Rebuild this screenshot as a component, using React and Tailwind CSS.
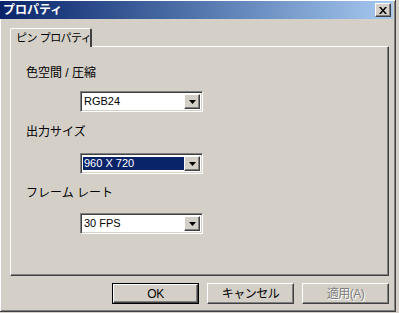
import React from 'react';

const FONT = { fontFamily: '"Liberation Sans", "Noto Sans CJK JP", sans-serif' };

const raised =
  'border border-t-white border-l-white border-r-[#404040] border-b-[#404040] shadow-[inset_-1px_-1px_0_#808080]';

function Arrow() {
  return (
    <svg width="7" height="4" viewBox="0 0 7 4">
      <path d="M0 0h7L3.5 4z" fill="#000" />
    </svg>
  );
}

function Combo({ value, selected }) {
  return (
    <div className="ml-[54px] w-[123px] h-[21px] border border-t-[#808080] border-l-[#808080] border-r-white border-b-white shadow-[inset_1px_1px_0_#404040,inset_-1px_-1px_0_#d4d0c8] bg-white flex items-stretch p-[2px]">
      <div className="flex-1 flex items-center min-w-0">
        <span
          className={`h-[13px] leading-[13px] pl-[1px] pr-[2px] text-[11px] flex-1 ${
            selected ? 'bg-[#0a246a] text-white' : 'text-black'
          }`}
        >
          {value}
        </span>
      </div>
      <div className={`w-[16px] bg-[#d4d0c8] flex items-center justify-center ${raised}`}>
        <Arrow />
      </div>
    </div>
  );
}

function Button({ children, isDefault, disabled }) {
  const inner = (
    <div
      className={`w-full h-full bg-[#d4d0c8] flex items-center justify-center text-[12px] tracking-[-0.5px] ${raised} ${
        disabled ? 'text-[#808080] [text-shadow:1px_1px_0_#fff]' : 'text-black'
      }`}
    >
      {children}
    </div>
  );
  return (
    <div className={`w-[87px] h-[21px] ${isDefault ? 'border border-black' : ''}`}>{inner}</div>
  );
}

export default function App() {
  return (
    <div className="w-[399px] h-[313px] bg-[#d4d0c8] overflow-hidden" style={FONT}>
      <div className="w-[396px] h-[312px] border-r border-b border-r-[#404040] border-b-[#404040] shadow-[inset_1px_1px_0_#fff,inset_-1px_-1px_0_#808080] pt-[1px] pr-[2px] flex flex-col">
        {/* title bar */}
        <div className="h-[18px] bg-gradient-to-r from-[#0a246a] to-[#a6caf0] flex items-center justify-between pl-[3px] pr-[2px]">
          <span className="text-white font-bold text-[12px] leading-none">プロパティ</span>
          <div className={`w-[16px] h-[14px] bg-[#d4d0c8] flex items-center justify-center ${raised}`}>
            <svg width="8" height="7" viewBox="0 0 8 7">
              <path d="M0 0h2l2 2.5L6 0h2L5 3.5 8 7H6L4 4.5 2 7H0l3-3.5z" fill="#000" />
            </svg>
          </div>
        </div>

        {/* tab */}
        <div className="pl-[10px] pt-[9px]">
          <div className="w-[82px] h-[19px] border-t border-l border-t-white border-l-white border-r-2 border-r-[#404040] rounded-tl-[2px] rounded-tr-[2px] flex items-center gap-[3px] pl-[5px] text-[11px] tracking-[-0.6px] whitespace-nowrap relative z-10 bg-[#d4d0c8] -mb-[1px]">
            <span>ピン</span>
            <span>プロパティ</span>
          </div>
          <div className="w-[379px] h-[230px] border-t border-l border-t-white border-l-white border-r border-b border-r-[#404040] border-b-[#404040] shadow-[inset_-1px_-1px_0_#808080] pl-[15px] pt-[19px] flex flex-col text-[12px]">
            <div className="h-[14px] leading-[14px]">色空間 / 圧縮</div>
            <div className="mt-[11px]">
              <Combo value="RGB24" />
            </div>
            <div className="mt-[13px] h-[14px] leading-[14px]">出力サイズ</div>
            <div className="mt-[14px]">
              <Combo value="960 X 720" selected />
            </div>
            <div className="mt-[12px] h-[14px] leading-[14px]">フレーム レート</div>
            <div className="mt-[13px]">
              <Combo value="30 FPS" />
            </div>
          </div>
          <div className="flex justify-end gap-[8px] w-[379px] mt-[7px]">
            <Button isDefault>OK</Button>
            <Button>キャンセル</Button>
            <Button disabled>適用(A)</Button>
          </div>
        </div>
      </div>
    </div>
  );
}
